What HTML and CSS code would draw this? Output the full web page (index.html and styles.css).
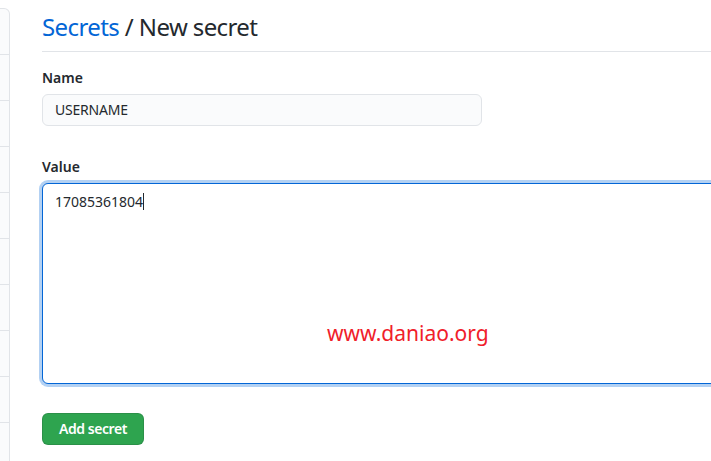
FILE: index.html
```html
<!DOCTYPE html>
<html lang="en">
<head>
<meta charset="utf-8">
<title>Secrets / New secret</title>
<link rel="stylesheet" href="styles.css">
</head>
<body>
<div class="layout">
  <nav class="sidebar">
    <div class="side-item"></div>
    <div class="side-item"></div>
    <div class="side-item"></div>
    <div class="side-item"></div>
    <div class="side-item"></div>
    <div class="side-item"></div>
    <div class="side-item"></div>
    <div class="side-item"></div>
    <div class="side-item"></div>
    <div class="side-item"></div>
  </nav>
  <main class="main">
    <div class="subhead">
      <h2 class="subhead-heading"><a class="crumb" href="#">Secrets</a> / New secret</h2>
    </div>
    <form class="form">
      <div class="form-group">
        <label class="label">Name</label>
        <div class="input">USERNAME</div>
      </div>
      <div class="form-group">
        <label class="label">Value</label>
        <div class="textarea">17085361804<span class="caret"></span></div>
      </div>
      <button type="button" class="btn-primary">Add secret</button>
    </form>
  </main>
</div>
<div class="watermark">www.daniao.org</div>
</body>
</html>
```

FILE: styles.css
```css
html, body {
  margin: 0;
  padding: 0;
  background: #ffffff;
  overflow: hidden;
}
body {
  font-family: "Noto Sans", "Liberation Sans", sans-serif;
  font-size: 14px;
  line-height: 1.5;
  color: #24292e;
  width: 711px;
  height: 461px;
  position: relative;
}
.layout {
  display: flex;
  gap: 32px;
  align-items: flex-start;
}
.sidebar {
  flex: 0 0 auto;
  width: 9px;
  margin-top: 8px;
  border: 1px solid #e1e4e8;
  border-left: none;
  border-radius: 0 6px 0 0;
  background: #fafbfc;
  display: flex;
  flex-direction: column;
}
.side-item {
  height: 45px;
  border-bottom: 1px solid #e1e4e8;
}
.main {
  flex: 1 1 auto;
  min-width: 0;
  padding-top: 9px;
}
.subhead {
  padding-bottom: 6px;
  border-bottom: 1px solid #e1e4e8;
  margin-bottom: 16px;
  width: 760px;
}
.subhead-heading {
  margin: 0;
  font-size: 24px;
  font-weight: 400;
  line-height: 36px;
  letter-spacing: -0.6px;
}
.crumb {
  color: #0366d6;
  text-decoration: none;
}
.form-group {
  margin-bottom: 31px;
}
.label {
  display: block;
  font-weight: 600;
  line-height: 20px;
  margin-bottom: 6px;
}
.input {
  box-sizing: border-box;
  width: 440px;
  height: 32px;
  padding: 5px 12px;
  line-height: 20px;
  background: #fafbfc;
  border: 1px solid #e1e4e8;
  border-radius: 6px;
  letter-spacing: -0.2px;
}
.textarea {
  box-sizing: border-box;
  width: 760px;
  height: 201px;
  padding: 8px 12px;
  line-height: 20px;
  background: #ffffff;
  border: 1px solid #0366d6;
  border-radius: 6px;
  box-shadow: 0 0 0 3px rgba(3, 102, 214, 0.3);
}
.caret {
  display: inline-block;
  width: 1px;
  height: 17px;
  background: #24292e;
  vertical-align: -3px;
}
.btn-primary {
  font-family: inherit;
  font-size: 14px;
  font-weight: 600;
  line-height: 20px;
  padding: 5px 16px;
  color: #ffffff;
  background: #2ea44f;
  border: 1px solid rgba(27, 31, 35, 0.15);
  border-radius: 6px;
  margin-top: -2px;
  letter-spacing: -0.45px;
}
.watermark {
  position: absolute;
  left: 327px;
  top: 318px;
  font-family: "Noto Sans", sans-serif;
  font-size: 21px;
  line-height: 30px;
  color: #f0202a;
}
```
